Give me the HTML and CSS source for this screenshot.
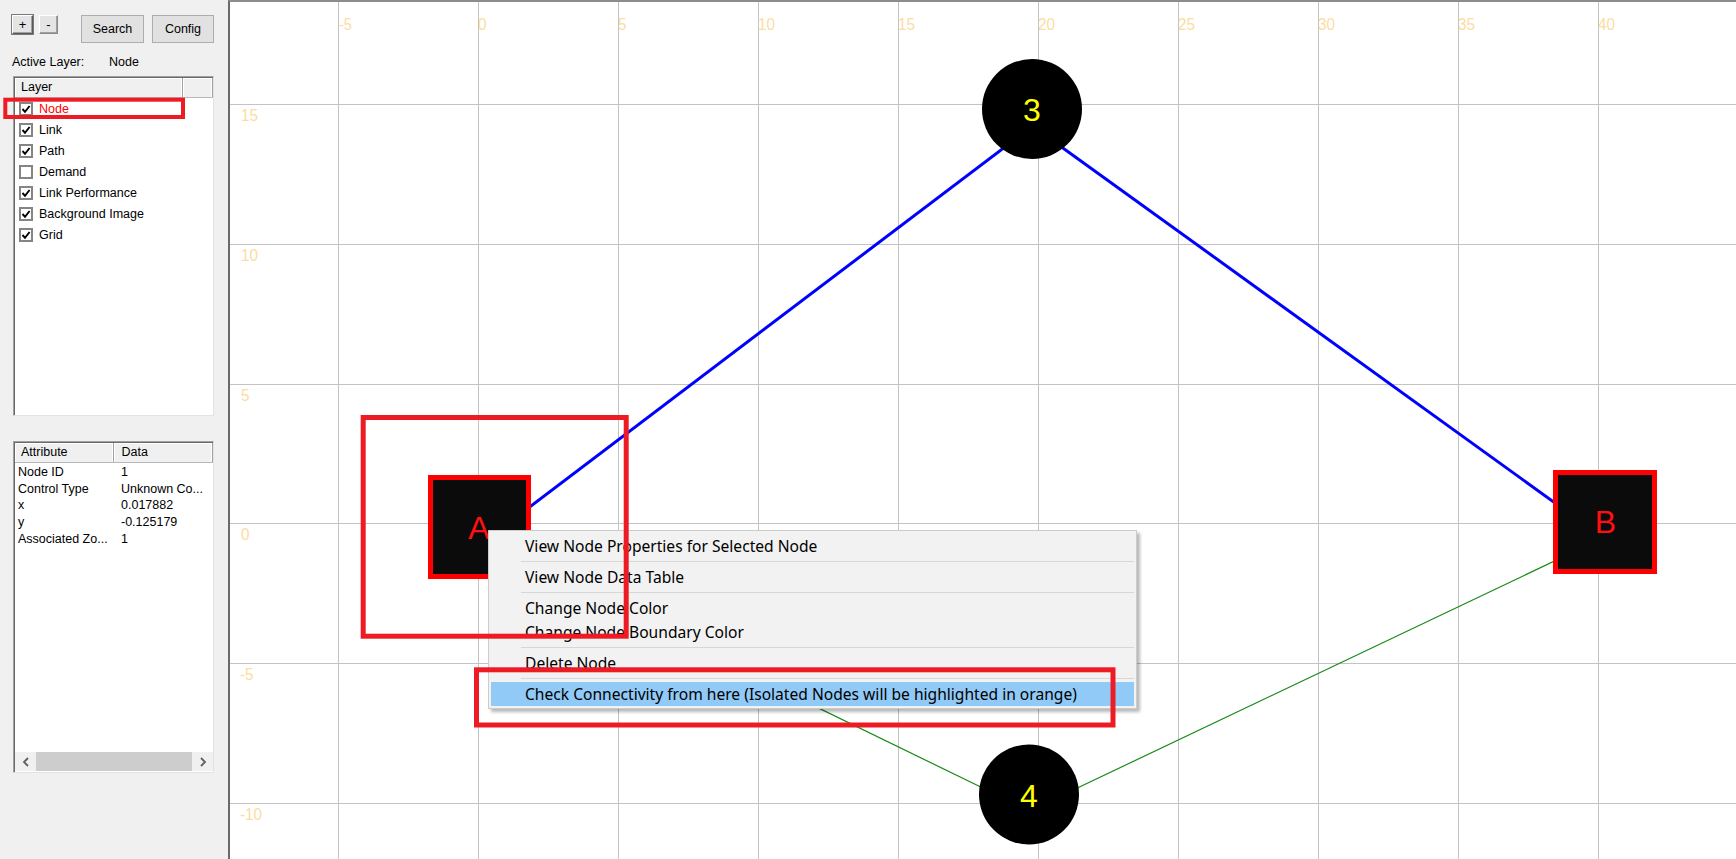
FILE: index.html
```html
<!DOCTYPE html>
<html>
<head>
<meta charset="utf-8">
<link rel="stylesheet" href="styles.css">
</head>
<body>
<div class="app">
  <aside class="panel">
    <div class="toolbar">
      <button class="tiny">+</button>
      <button class="tiny tiny2">-</button>
      <button class="btn btn-search">Search</button>
      <button class="btn btn-config">Config</button>
    </div>
    <div class="active-layer"><span class="al-label">Active Layer:</span><span>Node</span></div>
    <div class="list layer-list">
      <div class="list-head">
        <div class="hcell h-layer">Layer</div>
        <div class="hcell h-rest"></div>
      </div>
      <div class="lrow"><span class="cb"><svg viewBox="0 0 10 10"><path d="M1.5 5 L4 7.8 L8.6 2" /></svg></span><span class="red">Node</span></div>
      <div class="lrow"><span class="cb"><svg viewBox="0 0 10 10"><path d="M1.5 5 L4 7.8 L8.6 2" /></svg></span><span>Link</span></div>
      <div class="lrow"><span class="cb"><svg viewBox="0 0 10 10"><path d="M1.5 5 L4 7.8 L8.6 2" /></svg></span><span>Path</span></div>
      <div class="lrow"><span class="cb"></span><span>Demand</span></div>
      <div class="lrow"><span class="cb"><svg viewBox="0 0 10 10"><path d="M1.5 5 L4 7.8 L8.6 2" /></svg></span><span>Link Performance</span></div>
      <div class="lrow"><span class="cb"><svg viewBox="0 0 10 10"><path d="M1.5 5 L4 7.8 L8.6 2" /></svg></span><span>Background Image</span></div>
      <div class="lrow"><span class="cb"><svg viewBox="0 0 10 10"><path d="M1.5 5 L4 7.8 L8.6 2" /></svg></span><span>Grid</span></div>
    </div>
    <div class="list attr-list">
      <div class="list-head">
        <div class="hcell h-attr">Attribute</div>
        <div class="hcell h-data">Data</div>
      </div>
      <div class="arows">
        <div class="arow"><span class="c1">Node ID</span><span class="c2">1</span></div>
        <div class="arow"><span class="c1">Control Type</span><span class="c2">Unknown Co...</span></div>
        <div class="arow"><span class="c1">x</span><span class="c2">0.017882</span></div>
        <div class="arow"><span class="c1">y</span><span class="c2">-0.125179</span></div>
        <div class="arow"><span class="c1">Associated Zo...</span><span class="c2">1</span></div>
      </div>
      <div class="hscroll">
        <span class="arrow"><svg viewBox="0 0 8 10"><path d="M6 1 L2 5 L6 9" /></svg></span>
        <span class="thumb"></span>
        <span class="arrow"><svg viewBox="0 0 8 10"><path d="M2 1 L6 5 L2 9" /></svg></span>
      </div>
    </div>
  </aside>
  <main class="canvas">
    <svg class="map" width="1506" height="857" viewBox="230 2 1506 857">
      <g class="grid">
        <line x1="338.5" y1="0" x2="338.5" y2="860"/>
        <line x1="478.5" y1="0" x2="478.5" y2="860"/>
        <line x1="618.5" y1="0" x2="618.5" y2="860"/>
        <line x1="758.5" y1="0" x2="758.5" y2="860"/>
        <line x1="898.5" y1="0" x2="898.5" y2="860"/>
        <line x1="1038.5" y1="0" x2="1038.5" y2="860"/>
        <line x1="1178.5" y1="0" x2="1178.5" y2="860"/>
        <line x1="1318.5" y1="0" x2="1318.5" y2="860"/>
        <line x1="1458.5" y1="0" x2="1458.5" y2="860"/>
        <line x1="1598.5" y1="0" x2="1598.5" y2="860"/>
        <line x1="230" y1="104.5" x2="1740" y2="104.5"/>
        <line x1="230" y1="244.5" x2="1740" y2="244.5"/>
        <line x1="230" y1="384.5" x2="1740" y2="384.5"/>
        <line x1="230" y1="523.5" x2="1740" y2="523.5"/>
        <line x1="230" y1="663.5" x2="1740" y2="663.5"/>
        <line x1="230" y1="803.5" x2="1740" y2="803.5"/>
      </g>
      <g class="glabel">
        <text x="339" y="30" textLength="13" lengthAdjust="spacingAndGlyphs">-5</text>
        <text x="478" y="30" textLength="8.5" lengthAdjust="spacingAndGlyphs">0</text>
        <text x="618" y="30" textLength="8.5" lengthAdjust="spacingAndGlyphs">5</text>
        <text x="758" y="30" textLength="17" lengthAdjust="spacingAndGlyphs">10</text>
        <text x="898" y="30" textLength="17" lengthAdjust="spacingAndGlyphs">15</text>
        <text x="1038" y="30" textLength="17" lengthAdjust="spacingAndGlyphs">20</text>
        <text x="1178" y="30" textLength="17" lengthAdjust="spacingAndGlyphs">25</text>
        <text x="1318" y="30" textLength="17" lengthAdjust="spacingAndGlyphs">30</text>
        <text x="1458" y="30" textLength="17" lengthAdjust="spacingAndGlyphs">35</text>
        <text x="1598" y="30" textLength="17" lengthAdjust="spacingAndGlyphs">40</text>
        <text x="241" y="121" textLength="17" lengthAdjust="spacingAndGlyphs">15</text>
        <text x="241" y="261" textLength="17" lengthAdjust="spacingAndGlyphs">10</text>
        <text x="241" y="401" textLength="8.5" lengthAdjust="spacingAndGlyphs">5</text>
        <text x="241" y="540" textLength="8.5" lengthAdjust="spacingAndGlyphs">0</text>
        <text x="240" y="680" textLength="13.5" lengthAdjust="spacingAndGlyphs">-5</text>
        <text x="240" y="820" textLength="22" lengthAdjust="spacingAndGlyphs">-10</text>
      </g>
      <g class="links">
        <line class="blue" x1="479.5" y1="545" x2="1032" y2="126.4"/>
        <line class="blue" x1="1032" y1="125.7" x2="1605" y2="539"/>
        <line class="green" x1="479.5" y1="543" x2="1029" y2="810.5"/>
        <line class="green" x1="1029" y1="811" x2="1605" y2="537"/>
      </g>
      <g class="nodes">
        <rect class="sq" x="430.5" y="477.5" width="98" height="99"/>
        <text class="sqlabel" x="479" y="539">A</text>
        <rect class="sq" x="1555.5" y="472.5" width="99" height="99"/>
        <text class="sqlabel" x="1605.5" y="533">B</text>
        <circle class="cir" cx="1032" cy="109" r="50"/>
        <text class="cirlabel" x="1032" y="121">3</text>
        <circle class="cir" cx="1029" cy="794.5" r="50"/>
        <text class="cirlabel" x="1029" y="807">4</text>
      </g>
    </svg>
  </main>
</div>

<div class="menu">
  <div class="mi">View Node Properties for Selected Node</div>
  <div class="msep"></div>
  <div class="mi">View Node Data Table</div>
  <div class="msep"></div>
  <div class="mi">Change Node Color</div>
  <div class="mi">Change Node Boundary Color</div>
  <div class="msep"></div>
  <div class="mi">Delete Node</div>
  <div class="msep"></div>
  <div class="mi mi-hot">Check Connectivity from here (Isolated Nodes will be highlighted in orange)</div>
</div>

<svg class="annot" width="1736" height="859" viewBox="0 0 1736 859">
  <rect x="5.3" y="99.7" width="177.7" height="17.3" stroke-width="4"/>
  <rect x="363.2" y="417.5" width="263" height="218.7" stroke-width="5"/>
  <rect x="476.5" y="669.8" width="636.5" height="55.2" stroke-width="5"/>
</svg>
</body>
</html>
```

FILE: styles.css
```css
html, body {
  margin: 0;
  padding: 0;
}
body {
  width: 1736px;
  height: 859px;
  overflow: hidden;
  position: relative;
  background: #f0f0f0;
  font-family: "Liberation Sans", Arial, sans-serif;
  font-size: 12.5px;
  color: #000;
}
.app {
  display: flex;
  width: 1736px;
  height: 859px;
}
.panel {
  width: 228px;
  flex: none;
  background: #f0f0f0;
  box-sizing: border-box;
  padding-top: 15px;
}
.toolbar {
  display: flex;
  align-items: flex-start;
  padding-left: 12px;
  height: 28px;
}
.tiny {
  width: 21px;
  height: 19px;
  padding: 0;
  margin: 0 6px 0 0;
  font-family: "Liberation Sans", Arial, sans-serif;
  font-size: 13px;
  line-height: 15px;
  background: #e4e4e4;
  border: 1px solid;
  border-color: #ffffff #5a5a5a #5a5a5a #ffffff;
  box-shadow: inset -1px -1px 0 #a0a0a0, 0 0 0 1px #7a7a7a;
  color: #000;
}
.tiny2 {
  width: 19px;
  margin-right: 23px;
  box-shadow: inset -1px -1px 0 #a0a0a0;
  border-color: #ffffff #8a8a8a #8a8a8a #ffffff;
}
.btn {
  height: 28px;
  padding: 0;
  margin: 0;
  background: #e1e1e1;
  border: 1px solid #adadad;
  font-family: "Liberation Sans", Arial, sans-serif;
  font-size: 12.5px;
  color: #000;
}
.btn-search {
  width: 63px;
  margin-right: 8px;
}
.btn-config {
  width: 62px;
}
.active-layer {
  margin-top: 11px;
  padding-left: 12px;
  height: 16px;
  line-height: 16px;
  display: flex;
}
.al-label {
  width: 97px;
}
.list {
  margin-left: 13px;
  width: 201px;
  box-sizing: border-box;
  background: #fff;
  border: 1px solid;
  border-color: #a0a0a0 #e3e3e3 #e3e3e3 #a0a0a0;
  box-shadow: inset 1px 1px 0 #696969;
}
.layer-list {
  margin-top: 6px;
  height: 340px;
}
.attr-list {
  margin-top: 25px;
  height: 332px;
  display: flex;
  flex-direction: column;
}
.list-head {
  display: flex;
  height: 20px;
  margin: 1px 0 0 1px;
  background: #f0f0f0;
  border-bottom: 1px solid #b8b8b8;
  box-sizing: border-box;
}
.hcell {
  box-sizing: border-box;
  height: 19px;
  line-height: 19px;
  padding-left: 6px;
  border-right: 1px solid #a0a0a0;
  box-shadow: inset -1px 0 0 #fff, inset 1px 1px 0 #fff;
}
.h-layer { width: 169px; }
.h-rest { width: 30px; }
.h-attr { width: 99px; }
.h-data { width: 100px; padding-left: 8px; }
.lrow {
  height: 21px;
  display: flex;
  align-items: center;
  padding-left: 5px;
}
.layer-list .lrow:first-of-type {
  margin-top: 2px;
}
.cb {
  width: 14px;
  height: 14px;
  box-sizing: border-box;
  border: 2px solid #858585;
  background: #fff;
  margin-right: 6px;
  display: flex;
}
.cb svg {
  width: 10px;
  height: 10px;
}
.cb path {
  fill: none;
  stroke: #000;
  stroke-width: 1.9;
}
.red {
  color: #ff0000;
}
.arows {
  flex: 1;
  padding-top: 1px;
}
.arow {
  height: 16.7px;
  line-height: 16.7px;
  display: flex;
}
.c1 {
  width: 103px;
  padding-left: 4px;
}
.c2 {
  white-space: nowrap;
}
.hscroll {
  height: 19px;
  display: flex;
  align-items: stretch;
  background: #f0f0f0;
  margin: 0 0 1px 1px;
}
.arrow {
  width: 21px;
  display: flex;
  align-items: center;
  justify-content: center;
}
.arrow svg {
  width: 8px;
  height: 10px;
}
.arrow path {
  fill: none;
  stroke: #606060;
  stroke-width: 1.8;
}
.thumb {
  flex: 1;
  background: #cdcdcd;
}
.canvas {
  flex: 1;
  background: #fff;
  border-left: 2px solid #6a6a6a;
  border-top: 2px solid #8c8c8c;
  overflow: hidden;
  height: 857px;
}
.map {
  display: block;
}
.grid line {
  stroke: #c3c3c3;
  stroke-width: 1;
}
.glabel text {
  fill: #fcdca2;
  font-family: "Liberation Sans Narrow", "Liberation Sans", sans-serif;
  font-size: 17px;
}
.blue {
  stroke: #0000ff;
  stroke-width: 3;
}
.green {
  stroke: #1a8a1a;
  stroke-width: 1.2;
}
.sq {
  fill: #0b0b0b;
  stroke: #ff0000;
  stroke-width: 5;
}
.sqlabel {
  fill: #ff1010;
  font-family: "Liberation Sans", Arial, sans-serif;
  font-size: 32px;
  text-anchor: middle;
}
.cir {
  fill: #000;
}
.cirlabel {
  fill: #ffff00;
  font-family: "Liberation Sans", Arial, sans-serif;
  font-size: 32px;
  text-anchor: middle;
}
.menu {
  position: absolute;
  left: 488px;
  top: 530px;
  width: 649px;
  box-sizing: border-box;
  background: #f2f2f2;
  border: 1px solid #cccccc;
  padding: 3px 2px 2px 2px;
  box-shadow: 3px 3px 3px rgba(0, 0, 0, 0.28);
  font-family: "Noto Sans", "Open Sans", sans-serif;
  font-size: 15.6px;
  color: #000;
}
.mi {
  height: 24px;
  line-height: 24px;
  padding-left: 34px;
  white-space: nowrap;
}
.mi-hot {
  background: #91c9f7;
}
.msep {
  height: 1px;
  background: #d7d7d7;
  margin: 3px 0 3px 30px;
}
.annot {
  position: absolute;
  left: 0;
  top: 0;
  pointer-events: none;
}
.annot rect {
  fill: none;
  stroke: #ed1c24;
}
```
